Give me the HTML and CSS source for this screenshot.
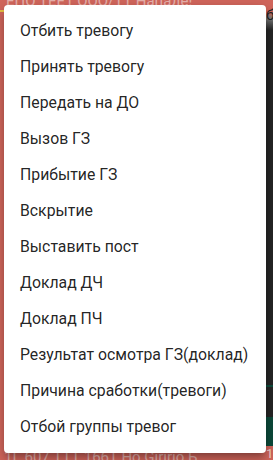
FILE: index.html
```html
<!DOCTYPE html>
<html lang="ru">
<head>
  <meta charset="UTF-8">
  <meta name="viewport" content="width=device-width, initial-scale=1.0">
  <title>Меню тревоги</title>
  <link rel="stylesheet" href="styles.css">
</head>
<body>
  <div class="backdrop">
    <div class="backdrop-main">
      <div class="backdrop-top">ЕПО ТЕЕ1 ООО/ТТ Нападе!</div>
      <div class="backdrop-bottom">1Г 607 ТТТ 166Т Но Giririo Б</div>
    </div>
    <div class="backdrop-side">
      <div class="side-head">б</div>
      <div class="side-dark"></div>
      <div class="side-line"></div>
      <div class="side-dark short"></div>
      <div class="side-teal"></div>
      <div class="side-foot">16</div>
    </div>
  </div>

  <div class="menu">
    <div class="menu-item">Отбить тревогу</div>
    <div class="menu-item">Принять тревогу</div>
    <div class="menu-item">Передать на ДО</div>
    <div class="menu-item">Вызов ГЗ</div>
    <div class="menu-item">Прибытие ГЗ</div>
    <div class="menu-item">Вскрытие</div>
    <div class="menu-item">Выставить пост</div>
    <div class="menu-item">Доклад ДЧ</div>
    <div class="menu-item">Доклад ПЧ</div>
    <div class="menu-item">Результат осмотра ГЗ(доклад)</div>
    <div class="menu-item">Причина сработки(тревоги)</div>
    <div class="menu-item">Отбой группы тревог</div>
  </div>
</body>
</html>
```

FILE: styles.css
```css
body {
  margin: 0;
  padding: 0;
  width: 273px;
  height: 460px;
  overflow: hidden;
  font-family: Roboto, "Liberation Sans", sans-serif;
  background-color: #d2665c;
  position: relative;
}

.backdrop {
  display: flex;
  height: 460px;
}

.backdrop-main {
  flex: 1;
  display: flex;
  flex-direction: column;
  justify-content: space-between;
  color: rgba(255, 255, 255, 0.5);
  font-size: 15px;
  white-space: nowrap;
  overflow: hidden;
}

.backdrop-top {
  margin-top: -8px;
  padding-left: 6px;
  border-bottom: 2px solid #e8c341;
  height: 18px;
}

.backdrop-bottom {
  margin-bottom: -6px;
  padding-left: 4px;
  height: 18px;
}

.backdrop-side {
  width: 7px;
  display: flex;
  flex-direction: column;
}

.side-head {
  height: 30px;
  background: linear-gradient(#d2665c 40%, #7a7a7a 60%, #262626);
  color: #222;
  font-size: 15px;
  line-height: 30px;
  overflow: hidden;
}

.side-dark {
  height: 355px;
  background-color: #262626;
}

.side-dark.short {
  height: 30px;
}

.side-line {
  height: 2px;
  background-color: #0f4d3d;
}

.side-teal {
  height: 29px;
  background-color: #0d4a3a;
}

.side-foot {
  flex: 1;
  color: rgba(255, 255, 255, 0.7);
  font-size: 13px;
  overflow: hidden;
}

.menu {
  position: absolute;
  top: 5px;
  left: 4px;
  width: 262px;
  padding: 8px 0;
  background-color: #fff;
  border-radius: 4px;
  box-shadow: 0 5px 5px -3px rgba(0, 0, 0, 0.2), 0 8px 10px 1px rgba(0, 0, 0, 0.14), 0 3px 14px 2px rgba(0, 0, 0, 0.12);
}

.menu-item {
  height: 36px;
  line-height: 35px;
  padding: 0 16px;
  font-size: 15.8px;
  color: rgba(0, 0, 0, 0.87);
  white-space: nowrap;
}
```
